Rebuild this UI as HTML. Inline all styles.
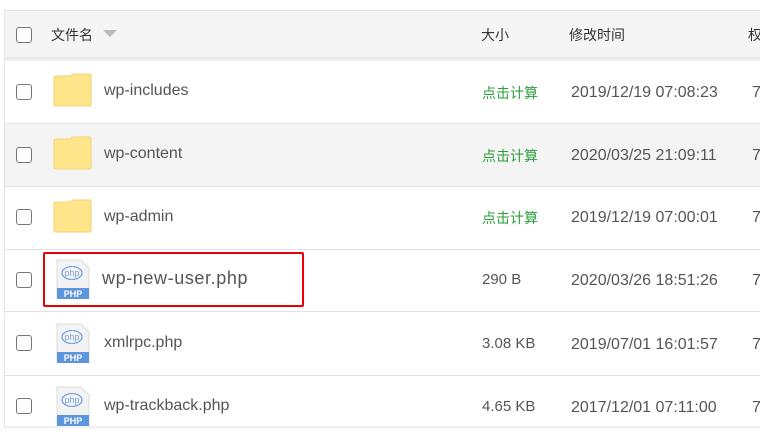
<!DOCTYPE html>
<html><head><meta charset="utf-8"><style>
*{margin:0;padding:0;box-sizing:border-box}
body{width:760px;height:446px;background:#fff;position:relative;overflow:hidden;font-family:"Liberation Sans","Noto Sans CJK SC",sans-serif;font-size:14px;color:#555}
.hdr{position:absolute;left:4px;top:10px;width:760px;height:48px;background:#f5f5f5;border-top:1px solid #e2e2e2;border-left:1px solid #e2e2e2;color:#333}
.sh{position:absolute;left:4px;top:57px;width:760px;height:4px;background:linear-gradient(#e4e4e4,#f3f3f3)}
.row{position:absolute;left:4px;width:760px;height:63px;border-left:1px solid #e2e2e2;border-bottom:1px solid #e2e2e2}
.cb{position:absolute;left:11px;width:16px;height:16px;border:1px solid #777;border-radius:3px;background:#fff}
.t{position:absolute;white-space:nowrap}
.n{font-size:16px;color:#555;margin-top:2px}
.d{font-size:16px;margin-top:3px}
.s{font-size:15px;margin-top:1px}
.g{color:#2a9e3a;margin-top:1px}
.folder{position:absolute;left:47px;top:12px;width:41px;height:34px}
.php{position:absolute;left:51px;top:10px;width:34px;height:40px}
</style></head><body>
<div class="hdr">
<div class="cb" style="top:16px"></div>
<div class="t" style="left:46px;top:14px">文件名</div>
<div style="position:absolute;left:98px;top:19px;width:0;height:0;border-left:7px solid transparent;border-right:7px solid transparent;border-top:7px solid #bbb"></div>
<div class="t" style="left:476px;top:14px">大小</div>
<div class="t" style="left:564px;top:14px">修改时间</div>
<div class="t" style="left:743px;top:14px">权</div>
</div>
<div class="sh"></div>

<div class="row" style="top:61px;height:63px">
<div class="cb" style="top:23px"></div>
<svg class="folder" viewBox="0 0 40 34"><path d="M1.5 5 Q1.5 3 3.5 3 H18 L20 1 H37.5 Q38.5 1 38.5 2.5 V31.5 Q38.5 33 37 33 H3 Q1.5 33 1.5 31.5 Z" fill="#ffe58a" stroke="#f2d378"/></svg>
<div class="t n" style="left:99px;top:19px">wp-includes</div>
<div class="t g" style="left:477px;top:21px">点击计算</div>
<div class="t d" style="left:566px;top:20px">2019/12/19 07:08:23</div>
<div class="t d" style="left:747px;top:20px">7</div>
</div>
<div class="row" style="top:124px;background:#f4f4f4">
<div class="cb" style="top:23px"></div>
<svg class="folder" viewBox="0 0 40 34"><path d="M1.5 5 Q1.5 3 3.5 3 H18 L20 1 H37.5 Q38.5 1 38.5 2.5 V31.5 Q38.5 33 37 33 H3 Q1.5 33 1.5 31.5 Z" fill="#ffe58a" stroke="#f2d378"/></svg>
<div class="t n" style="left:99px;top:19px">wp-content</div>
<div class="t g" style="left:477px;top:21px">点击计算</div>
<div class="t d" style="left:566px;top:20px">2020/03/25 21:09:11</div>
<div class="t d" style="left:747px;top:20px">7</div>
</div>
<div class="row" style="top:187px">
<div class="cb" style="top:22px"></div>
<svg class="folder" viewBox="0 0 40 34"><path d="M1.5 5 Q1.5 3 3.5 3 H18 L20 1 H37.5 Q38.5 1 38.5 2.5 V31.5 Q38.5 33 37 33 H3 Q1.5 33 1.5 31.5 Z" fill="#ffe58a" stroke="#f2d378"/></svg>
<div class="t n" style="left:99px;top:19px">wp-admin</div>
<div class="t g" style="left:477px;top:20px">点击计算</div>
<div class="t d" style="left:566px;top:19px">2019/12/19 07:00:01</div>
<div class="t d" style="left:747px;top:19px">7</div>
</div>

<svg width="0" height="0" style="position:absolute"><defs><symbol id="p" viewBox="0 0 34 40"><path d="M1 1 H25 L33 9 V39 H1 Z" fill="#f3f3f3" stroke="#ddd"/><ellipse cx="16" cy="14" rx="10" ry="6.5" fill="none" stroke="#7aa6dd" stroke-width="1.3"/><text x="16" y="17" font-size="9" fill="#7aa6dd" text-anchor="middle" font-family="Liberation Sans">php</text><rect x="1" y="29" width="32" height="11" fill="#5b95dc"/><text x="17" y="38" font-size="9" fill="#fff" text-anchor="middle" font-family="Liberation Sans" font-weight="bold">PHP</text></symbol></defs></svg>

<div class="row" style="top:250px;height:62px">
<div class="cb" style="top:22px"></div>
<svg class="php" style="top:9px"><use href="#p"/></svg>
<div class="t" style="left:97px;top:18px;font-size:18px;letter-spacing:0.6px;color:#555">wp-new-user.php</div>
<div class="t s" style="left:477px;top:20px">290 B</div>
<div class="t d" style="left:566px;top:19px">2020/03/26 18:51:26</div>
<div class="t d" style="left:747px;top:19px">7</div>
</div>
<div style="position:absolute;left:43px;top:252px;width:261px;height:55px;border:2px solid #e8000b;border-radius:2px"></div>
<div class="row" style="top:313px">
<div class="cb" style="top:22px"></div>
<svg class="php"><use href="#p"/></svg>
<div class="t n" style="left:99px;top:19px">xmlrpc.php</div>
<div class="t s" style="left:477px;top:21px">3.08 KB</div>
<div class="t d" style="left:566px;top:20px">2019/07/01 16:01:57</div>
<div class="t d" style="left:747px;top:20px">7</div>
</div>
<div class="row" style="top:376px;height:51px;border-bottom:none">
<div class="cb" style="top:22px"></div>
<svg class="php"><use href="#p"/></svg>
<div class="t n" style="left:99px;top:19px">wp-trackback.php</div>
<div class="t s" style="left:477px;top:21px">4.65 KB</div>
<div class="t d" style="left:566px;top:20px">2017/12/01 07:11:00</div>
<div class="t d" style="left:747px;top:20px">7</div>
</div>
<div style="position:absolute;left:4px;top:426px;width:760px;height:4px;background:linear-gradient(#ececec,#fff)"></div>
</body></html>
